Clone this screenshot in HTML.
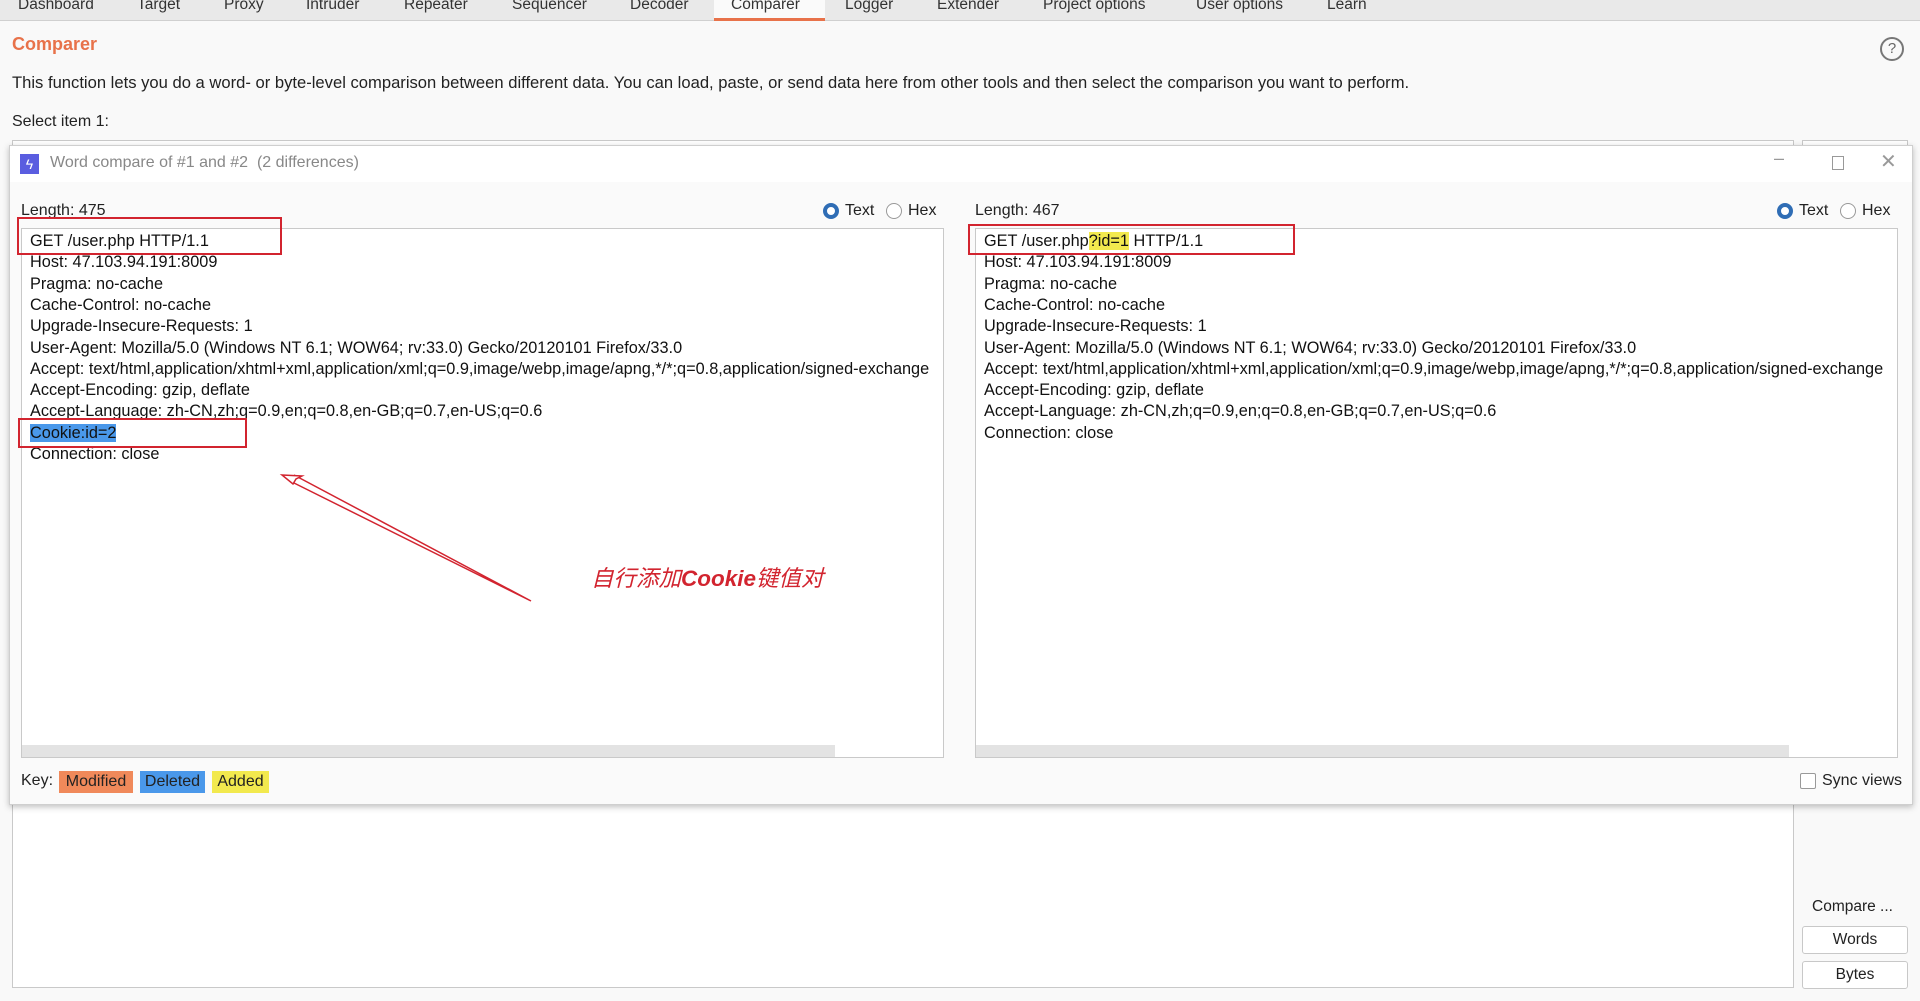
<!DOCTYPE html>
<html><head><meta charset="utf-8"><style>
*{margin:0;padding:0;box-sizing:border-box}
body{width:1920px;height:1001px;background:#f9f9f9;font-family:"Liberation Sans","Noto Sans CJK SC",sans-serif;color:#222;position:relative;overflow:hidden;font-size:16px}
.abs{position:absolute;white-space:nowrap}
.tabs{position:absolute;left:0;top:0;width:1920px;height:21px;background:#e9e9e9;border-bottom:1px solid #d0d0d0}
.tab{position:absolute;top:-4px;font-size:15.5px;color:#333}
.ta{position:absolute;background:#fff;border:1px solid #c9c9c9}
.ta .ln{position:absolute;left:8px;font-size:16.3px;line-height:21.3px;white-space:nowrap;color:#111}
.sb{position:absolute;height:12px;background:#e3e3e3;bottom:0}
.rb{position:absolute;width:16px;height:16px;border-radius:50%;border:1px solid #999;background:#fff}
.rb.on{border:4px solid #2f6db5}
.red{position:absolute;border:2px solid #d2242f}
.btn{position:absolute;background:#fff;border:1px solid #c8c8c8;border-radius:3px;text-align:center;font-size:15.5px;line-height:26px}
</style></head><body>
<div class="tabs">
<div style="position:absolute;left:714px;top:0;width:111px;height:21px;background:#fafafa;border-bottom:3px solid #e8724a"></div>
<span class="tab" style="left:18px">Dashboard</span>
<span class="tab" style="left:137px">Target</span>
<span class="tab" style="left:224px">Proxy</span>
<span class="tab" style="left:306px">Intruder</span>
<span class="tab" style="left:404px">Repeater</span>
<span class="tab" style="left:512px">Sequencer</span>
<span class="tab" style="left:630px">Decoder</span>
<span class="tab" style="left:731px">Comparer</span>
<span class="tab" style="left:845px">Logger</span>
<span class="tab" style="left:937px">Extender</span>
<span class="tab" style="left:1043px">Project options</span>
<span class="tab" style="left:1196px">User options</span>
<span class="tab" style="left:1327px">Learn</span>
</div>
<div class="abs" style="left:12px;top:34px;font-size:18px;font-weight:bold;color:#e8724a">Comparer</div>
<div class="abs" style="left:1880px;top:37px;width:24px;height:24px;border:2px solid #777;border-radius:50%;text-align:center;font-size:15px;line-height:20px;color:#666">?</div>
<div class="abs" style="left:12px;top:73px;font-size:16.6px">This function lets you do a word- or byte-level comparison between different data. You can load, paste, or send data here from other tools and then select the comparison you want to perform.</div>
<div class="abs" style="left:12px;top:113px;font-size:16px">Select item 1:</div>
<div class="abs" style="left:12px;top:140px;width:1782px;height:848px;background:#fff;border:1px solid #c9c9c9"></div>
<div class="abs" style="left:1802px;top:140px;width:106px;height:6px;border:1px solid #c9c9c9;border-bottom:none;background:#fff"></div>
<div class="abs" style="left:1812px;top:898px;font-size:15.5px">Compare ...</div>
<div class="btn" style="left:1802px;top:926px;width:106px;height:28px">Words</div>
<div class="btn" style="left:1802px;top:961px;width:106px;height:28px">Bytes</div>
<div class="abs" style="left:9px;top:145px;width:1904px;height:660px;background:#fafafa;border:1px solid #cfcfcf;box-shadow:0 2px 6px rgba(0,0,0,.25)">
 <div style="position:absolute;left:0;top:0;width:100%;height:36px;background:#fff"></div>
 <div style="position:absolute;left:10px;top:8px;width:19px;height:20px;background:#5a5de0;color:#fff;font-size:14px;text-align:center;line-height:20px">ϟ</div>
 <div class="abs" style="left:40px;top:8px;font-size:16px;color:#888">Word compare of #1 and #2&nbsp; (2 differences)</div>
 <div class="abs" style="left:1764px;top:2px;font-size:18px;color:#999">–</div>
 <div class="abs" style="left:1822px;top:10px;width:12px;height:14px;border:1px solid #999"></div>
 <div class="abs" style="left:1870px;top:3px;font-size:20px;color:#999">✕</div>
</div>
<div class="abs" style="left:21px;top:202px;font-size:16px">Length: 475</div>
<div class="rb on" style="left:823px;top:203px"></div><div class="abs" style="left:845px;top:202px;font-size:16px">Text</div>
<div class="rb" style="left:886px;top:203px"></div><div class="abs" style="left:908px;top:202px;font-size:16px">Hex</div>
<div class="abs" style="left:975px;top:202px;font-size:16px">Length: 467</div>
<div class="rb on" style="left:1777px;top:203px"></div><div class="abs" style="left:1799px;top:202px;font-size:16px">Text</div>
<div class="rb" style="left:1840px;top:203px"></div><div class="abs" style="left:1862px;top:202px;font-size:16px">Hex</div>

<div class="ta" style="left:21px;top:228px;width:923px;height:530px;overflow:hidden">
<div class="ln" style="top:2px">GET /user.php HTTP/1.1</div>
<div class="ln" style="top:23.3px">Host: 47.103.94.191:8009</div>
<div class="ln" style="top:44.6px">Pragma: no-cache</div>
<div class="ln" style="top:65.9px">Cache-Control: no-cache</div>
<div class="ln" style="top:87.2px">Upgrade-Insecure-Requests: 1</div>
<div class="ln" style="top:108.5px">User-Agent: Mozilla/5.0 (Windows NT 6.1; WOW64; rv:33.0) Gecko/20120101 Firefox/33.0</div>
<div class="ln" style="top:129.8px">Accept: text/html,application/xhtml+xml,application/xml;q=0.9,image/webp,image/apng,*/*;q=0.8,application/signed-exchange</div>
<div class="ln" style="top:151.1px">Accept-Encoding: gzip, deflate</div>
<div class="ln" style="top:172.4px">Accept-Language: zh-CN,zh;q=0.9,en;q=0.8,en-GB;q=0.7,en-US;q=0.6</div>
<div class="ln" style="top:193.7px"><span style="background:#4a98ea">Cookie:id=2</span></div>
<div class="ln" style="top:215px">Connection: close</div>
<div class="sb" style="left:0;width:813px"></div>
</div>
<div class="ta" style="left:975px;top:228px;width:923px;height:530px;overflow:hidden">
<div class="ln" style="top:2px">GET /user.php<span style="background:#f2e94e">?id=1</span> HTTP/1.1</div>
<div class="ln" style="top:23.3px">Host: 47.103.94.191:8009</div>
<div class="ln" style="top:44.6px">Pragma: no-cache</div>
<div class="ln" style="top:65.9px">Cache-Control: no-cache</div>
<div class="ln" style="top:87.2px">Upgrade-Insecure-Requests: 1</div>
<div class="ln" style="top:108.5px">User-Agent: Mozilla/5.0 (Windows NT 6.1; WOW64; rv:33.0) Gecko/20120101 Firefox/33.0</div>
<div class="ln" style="top:129.8px">Accept: text/html,application/xhtml+xml,application/xml;q=0.9,image/webp,image/apng,*/*;q=0.8,application/signed-exchange</div>
<div class="ln" style="top:151.1px">Accept-Encoding: gzip, deflate</div>
<div class="ln" style="top:172.4px">Accept-Language: zh-CN,zh;q=0.9,en;q=0.8,en-GB;q=0.7,en-US;q=0.6</div>
<div class="ln" style="top:193.7px">Connection: close</div>
<div class="sb" style="left:0;width:813px"></div>
</div>

<div class="abs" style="left:21px;top:772px;font-size:16px">Key:</div>
<div class="abs" style="left:59px;top:771px;width:74px;height:22px;background:#f0895a;font-size:16px;text-align:center;line-height:22px">Modified</div>
<div class="abs" style="left:140px;top:771px;width:65px;height:22px;background:#4a98ea;font-size:16px;text-align:center;line-height:22px">Deleted</div>
<div class="abs" style="left:212px;top:771px;width:57px;height:22px;background:#f2e94e;font-size:16px;text-align:center;line-height:22px">Added</div>
<div class="abs" style="left:1800px;top:773px;width:16px;height:16px;border:1px solid #999;background:#fff;border-radius:2px"></div>
<div class="abs" style="left:1822px;top:772px;font-size:16px">Sync views</div>

<div class="red" style="left:17px;top:217px;width:265px;height:38px"></div>
<div class="red" style="left:968px;top:224px;width:327px;height:31px"></div>
<div class="red" style="left:18px;top:418px;width:229px;height:30px"></div>
<svg class="abs" style="left:0;top:0" width="1920" height="1001">
<g stroke="#d2242f" stroke-width="1.5" fill="none">
<path d="M531 601 L290 481 M531 601 L294 475"/>
<path d="M282 475 L302 476 L296 479 L293 484 Z" fill="#fff"/>
</g>
</svg>
<div class="abs" style="left:591px;top:561px;font-size:22.5px;font-style:italic;color:#d2242f">自行添加<b>Cookie</b>键值对</div>
</body></html>
